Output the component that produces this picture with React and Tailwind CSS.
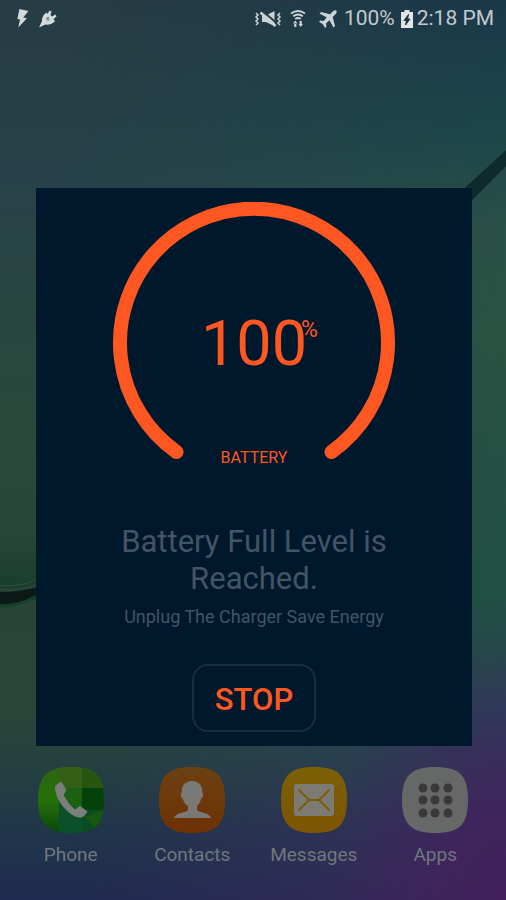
import { MdFlashOn } from 'react-icons/md';

const BATTERY_LEVEL = 100;

function Wallpaper() {
    return (
        <div className="absolute inset-0 -z-10 bg-[linear-gradient(to_bottom,#273c44_0%,#27424a_20%,#28463f_35%,#29493a_50%,#264536_63%,#294738_78%,#243f40_86%,#20364a_92%,#1f2b4f_100%)]">
            <div className="absolute inset-0 bg-[linear-gradient(to_bottom,#1b384a_0%,#1d464a_15%,#2b5048_25%,#2b5242_37%,#245045_55%,#205045_72%,#26465a_79%,#2f3b5a_86%,#36305c_92%,#3c2a5c_100%)] mask-[linear-gradient(to_right,transparent_15%,black_100%)]"></div>
            <div className="absolute inset-0 bg-[radial-gradient(ellipse_at_100%_100%,#43205c_0%,transparent_24%)]"></div>
            <svg className="absolute inset-0 h-full w-full" viewBox="0 0 506 900" preserveAspectRatio="none" aria-hidden="true">
                <defs>
                    <linearGradient id="fold" x1="0" y1="0" x2="0" y2="1">
                        <stop offset="0" stopColor="#133a29" stopOpacity="0" />
                        <stop offset="1" stopColor="#133a29" />
                    </linearGradient>
                </defs>
                <path d="M0 540H60V572Q30 590 0 588Z" fill="url(#fold)" opacity="0.7" />
                <path d="M0 585Q22 586 36 579" fill="none" stroke="#2a553f" strokeWidth="1" />
                <path d="M0 591Q22 592 60 580V588Q20 607 0 604Z" fill="#0b1a16" />
                <path d="M0 605Q18 606 36 596" fill="none" stroke="#173f2c" strokeWidth="3" />
                <path d="M460 192L506 150V166L466 206Z" fill="#0f2a2b" />
            </svg>
        </div>
    );
}

function PlugIcon() {
    return (
        <svg className="h-5 w-5" viewBox="0 0 20 20" fill="#d3dadb" aria-hidden="true">
            <path d="M1 18.500L4 12Q3.500 7 8.500 3.500L9.500 5L11.500 1.500L13.500 2.500L12.500 6L14 7.500L17.500 5.500L18.500 7.500L15.500 10L17 12.500Q12.500 16.500 7.500 15.500Z" />
            <path d="M9 8L8 11H10L9 13.500L12 10H10.500L11.500 8Z" fill="#7c8b8d" />
        </svg>
    );
}

function MuteVibrateIcon() {
    return (
        <svg className="h-5 w-7" viewBox="0 0 28 20" fill="none" stroke="#ccd4d7" strokeWidth="1.500" aria-hidden="true">
            <path d="M2 4L4 6L2 8L4 10L2 12L4 14L2 16M26 4L24 6L26 8L24 10L26 12L24 14L26 16" />
            <path d="M8 6.500H12L20.500 2V17L12 13H8Z" fill="#ccd4d7" stroke="none" />
            <path d="M8 1.500L22.500 14" stroke="#263f47" strokeWidth="2" />
            <path d="M6.500 3.500L21.500 17" strokeWidth="2.600" />
        </svg>
    );
}

function WifiIcon() {
    return (
        <svg className="h-5 w-5" viewBox="0 0 20 20" fill="none" stroke="#ccd4d7" strokeWidth="1.800" aria-hidden="true">
            <path d="M3 4.500Q10 -0.500 17 4.500M5.200 7.200Q10 3.800 14.800 7.200M7.300 10Q10 8 12.700 10" />
            <path d="M5 14.500H9.500L7.300 11.500ZM10.500 15H15L12.700 18ZM6.200 14H8.400V18H6.200ZM11.600 12H13.800V15.500H11.600Z" fill="#ccd4d7" stroke="none" />
        </svg>
    );
}

function AirplaneIcon() {
    return (
        <svg className="h-5 w-5" viewBox="0 0 20 20" fill="#ccd4d7" aria-hidden="true">
            <path d="M18.500 1.500Q16.500 0.800 15 2.300L12 5.300L3 3L1.500 4.500L8.800 8.600L5.500 12L2.300 11.500L1 12.800L4.800 15.200L7.200 19L8.500 17.700L8 14.500L11.400 11.200L15.500 18.500L17 17L14.700 8L17.700 5Q19.200 3.500 18.500 1.500Z" />
        </svg>
    );
}

function BatteryIcon() {
    return (
        <svg className="h-5 w-3" viewBox="0 0 12 20" aria-hidden="true">
            <path d="M3.500 1H8.500V3H12V19H0V3H3.500Z" fill="#e2e6e8" />
            <path d="M7.500 5.500L3 11.500H5.500L4.500 16L9 10H6.500Z" fill="#1d3038" stroke="#1d3038" />
        </svg>
    );
}

function StatusBar() {
    return (
        <header className="flex h-[38px] items-center justify-between px-3 text-[21px] text-[#c3cacf]">
            <div className="flex items-center gap-1.5">
                <MdFlashOn className="h-[22px] w-5 scale-110 rotate-12 text-[#d3dadb]" aria-hidden="true" />
                <PlugIcon />
            </div>
            <div className="flex items-center gap-1.5">
                <MuteVibrateIcon />
                <WifiIcon />
                <div className="flex items-center gap-1.5 pl-1">
                    <AirplaneIcon />
                    <span>{BATTERY_LEVEL}%</span>
                </div>
                <div className="flex items-center gap-1">
                    <BatteryIcon />
                    <span>2:18 PM</span>
                </div>
            </div>
        </header>
    );
}

function Gauge() {
    return (
        <div className="grid justify-items-center text-[#ff5722]">
            <svg className="col-start-1 row-start-1 h-[268px] w-[282px]" viewBox="0 0 282 268" fill="none" aria-hidden="true">
                <path d="M63.500 250A134 134 0 1 1 218.500 250" stroke="#ff5722" strokeWidth="14" strokeLinecap="round" />
            </svg>
            <div className="col-start-1 row-start-1 flex flex-col items-center justify-between pt-[110px]">
                <p className="relative text-[63px] leading-none">
                    {BATTERY_LEVEL}
                    <span className="absolute top-1.5 left-full -ml-1.5 text-[23px] leading-none">%</span>
                </p>
                <p className="text-base leading-6">BATTERY</p>
            </div>
        </div>
    );
}

function BatteryDialog() {
    return (
        <main
            role="dialog"
            aria-labelledby="dialog-title"
            className="mt-[150px] mr-[34px] ml-9 flex flex-col items-center bg-[#00182b] pt-[14px] pb-[14px] text-center text-[#435466]"
        >
            <Gauge />
            <h1 id="dialog-title" className="mt-[53px] max-w-[300px] text-[31px] leading-[37px]">
                Battery Full Level is Reached.
            </h1>
            <p className="mt-2 text-lg leading-6">Unplug The Charger Save Energy</p>
            <button type="button" className="mt-[35px] h-17 w-31 rounded-2xl border-2 border-[#1a2d3c] pt-1 text-[31px] font-medium text-[#ff5722]">
                STOP
            </button>
        </main>
    );
}

function PhoneIcon() {
    return (
        <svg className="h-[66px] w-[66px]" viewBox="0 0 66 66" aria-hidden="true">
            <defs>
                <clipPath id="phone-shape">
                    <path d="M33 0C57 0 66 8 66 33S57 66 33 66S0 57 0 33S9 0 33 0Z" />
                </clipPath>
                <linearGradient id="phone-left" x1="0" y1="0" x2="0" y2="1">
                    <stop offset="0" stopColor="#2c6510" />
                    <stop offset="0.5" stopColor="#26700a" />
                    <stop offset="1" stopColor="#0b470c" />
                </linearGradient>
            </defs>
            <g clipPath="url(#phone-shape)">
                <path d="M0 0H66V66H0Z" fill="url(#phone-left)" />
                <path d="M21 0H44V21H21Z" fill="#345f15" />
                <path d="M44 0H66V21H44Z" fill="#285510" />
                <path d="M21 21H44V66H21Z" fill="#0a5029" />
                <path d="M21 21H44V46L21 28Z" fill="#1c6012" />
                <path d="M44 21H66V43H44Z" fill="#03430a" />
                <path d="M44 43H66V66H44Z" fill="#0b4c20" />
                <path d="M47 50L66 43V66H62Z" fill="#155810" />
            </g>
            <path d="M17.500 19L23 15L28 23L25 28Q29 36 37 43L42 39.500L49 44.500Q46 51 40 50C29 47 17 32 17.500 19Z" fill="#7b7e7b" stroke="#7b7e7b" strokeLinejoin="round" />
        </svg>
    );
}

function ContactsIcon() {
    return (
        <svg className="h-[66px] w-[66px]" viewBox="0 0 66 66" aria-hidden="true">
            <defs>
                <linearGradient id="contacts-fill" x1="0" y1="0" x2="0" y2="1">
                    <stop offset="0" stopColor="#6b4112" />
                    <stop offset="1" stopColor="#6f3103" />
                </linearGradient>
            </defs>
            <path d="M33 0C57 0 66 8 66 33S57 66 33 66S0 57 0 33S9 0 33 0Z" fill="url(#contacts-fill)" />
            <path d="M33 14C40 14 44 19 43 25C45 26 44 31 42 32C41 36 39 38 38 39V43C40 46 50 45 52 51H15C17 45 27 46 29 43V39C27 38 25 36 24 32C22 31 21 26 23 25C22 19 26 14 33 14Z" fill="#7b7975" />
        </svg>
    );
}

function MessagesIcon() {
    return (
        <svg className="h-[66px] w-[66px]" viewBox="0 0 66 66" aria-hidden="true">
            <defs>
                <linearGradient id="messages-fill" x1="0" y1="0" x2="0" y2="1">
                    <stop offset="0" stopColor="#7b6106" />
                    <stop offset="1" stopColor="#7d5403" />
                </linearGradient>
            </defs>
            <path d="M33 0C57 0 66 8 66 33S57 66 33 66S0 57 0 33S9 0 33 0Z" fill="url(#messages-fill)" />
            <rect x="13" y="17" width="40" height="32" rx="2" fill="#7b7a73" />
            <path d="M18 23L28 33H38L48 23M18 43L28 33M38 33L48 43" fill="none" stroke="#7b5b05" strokeWidth="1.800" strokeLinecap="round" />
        </svg>
    );
}

function AppsIcon() {
    return (
        <svg className="h-[66px] w-[66px]" viewBox="0 0 66 66" aria-hidden="true">
            <path d="M33 0C57 0 66 8 66 33S57 66 33 66S0 57 0 33S9 0 33 0Z" fill="#666767" />
            {[21, 33, 46].map((y) =>
                [21, 33, 46].map((x) => <circle key={`${x}-${y}`} cx={x} cy={y} r="4.500" fill="#393939" />)
            )}
        </svg>
    );
}

const dockApps = [
    { name: 'Phone', Icon: PhoneIcon },
    { name: 'Contacts', Icon: ContactsIcon },
    { name: 'Messages', Icon: MessagesIcon },
    { name: 'Apps', Icon: AppsIcon },
];

export default function App() {
    return (
        <div className="relative isolate flex min-h-screen flex-col overflow-hidden font-[Roboto,sans-serif]">
            <Wallpaper />
            <StatusBar />
            <BatteryDialog />

            {/* Dock */}
            <nav className="mt-[21px] grid grid-cols-4 px-[10px] pb-8">
                {dockApps.map(({ name, Icon }) => (
                    <a key={name} href="#" className="flex flex-col items-center gap-2 text-[19px] leading-7 text-[#70777c]">
                        <Icon />
                        {name}
                    </a>
                ))}
            </nav>
        </div>
    );
}
